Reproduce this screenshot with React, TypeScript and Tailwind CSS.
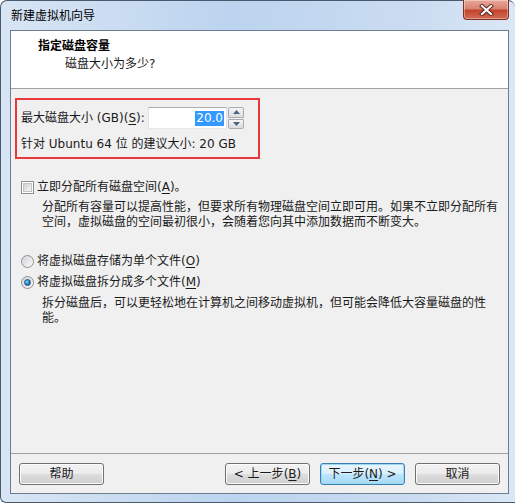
import React from 'react';

const font = { fontFamily: '"DejaVu Sans", "Noto Sans CJK SC", sans-serif' };

const Key: React.FC<{ k: string }> = ({ k }) => (
  <>
    (<span className="underline underline-offset-2">{k}</span>)
  </>
);

const WinButton: React.FC<{ children: React.ReactNode; primary?: boolean }> = ({ children, primary }) => (
  <button
    className={`h-[22px] w-[85px] rounded-[3px] border text-[12px] leading-none text-[#1a1a1a] ${
      primary
        ? 'border-[#3c7fb1] bg-[linear-gradient(#eaf6fd_0%,#d9f0fc_50%,#bee6fd_51%,#a7d9f5_100%)] shadow-[inset_0_0_0_1px_#9bd8f5]'
        : 'border-[#707070] bg-[linear-gradient(#f2f2f2_0%,#ebebeb_50%,#dddddd_51%,#cfcfcf_100%)] shadow-[inset_0_0_0_1px_#fcfcfc]'
    }`}
  >
    {children}
  </button>
);

const Checkbox: React.FC = () => (
  <span className="flex h-[13px] w-[13px] items-center justify-center border border-[#8e8f8f] bg-white">
    <span className="h-[9px] w-[9px] border border-[#c4c4c4] bg-[linear-gradient(135deg,#cbcfd5,#f6f6f6)]" />
  </span>
);

const Radio: React.FC<{ checked?: boolean }> = ({ checked }) => (
  <span className="flex h-[13px] w-[13px] items-center justify-center rounded-full border border-[#8e8f8f] bg-[linear-gradient(135deg,#d2d4d8,#fafafa)]">
    {checked && (
      <span className="h-[7px] w-[7px] rounded-full border border-[#1c5180] bg-[radial-gradient(circle_at_35%_35%,#8ad4f7,#1d77ba_60%,#0e4a84)]" />
    )}
  </span>
);

export default function App() {
  return (
    <div className="h-[503px] w-[515px] overflow-hidden bg-white" style={font}>
      <div className="flex h-[503px] w-[515px] flex-col rounded-t-[7px] rounded-bl-[6px] border-b border-l border-t border-[#4a5a6e] bg-[linear-gradient(90deg,#d8e5f4_0%,#bcd4ef_45%,#cadcf1_80%,#dbe7f5_100%)]">
        {/* Title bar */}
        <div className="relative flex h-[29px] items-center pl-[10px]">
          <span className="text-[12px] text-black">新建虚拟机向导</span>
          <div className="absolute right-[6px] top-[-1px] flex h-[20px] w-[46px] items-center justify-center rounded-b-[4px] border border-t-0 border-[#7d3224] bg-[linear-gradient(#e9a799_0%,#d98473_45%,#c3442d_55%,#d46b55_100%)] shadow-[inset_0_0_0_1px_rgba(255,255,255,0.35)]">
            <svg width="15" height="12" viewBox="0 0 15 12">
              <path d="M3 2 L12 10 M12 2 L3 10" stroke="#5a2218" strokeWidth="4" strokeLinecap="square" />
              <path d="M3 2 L12 10 M12 2 L3 10" stroke="#ffffff" strokeWidth="2.2" strokeLinecap="square" />
            </svg>
          </div>
        </div>

        {/* Client area */}
        <div className="ml-[9px] mr-[6px] flex h-[464px] flex-col border border-[#6d7d8f] bg-[#f0f0f0] text-[12px] leading-[15px] text-[#1a1a1a]">
          <div className="h-[58px] border-b border-[#a0a0a0] bg-white pl-[27px] pt-[8px]">
            <div className="font-bold text-black">指定磁盘容量</div>
            <div className="mt-[3px] pl-[27px]">磁盘大小为多少?</div>
          </div>

          <div className="flex-1">
            <div className="ml-[4px] mt-[9px] h-[61px] w-[245px] border-2 border-[#e8383a] pl-[4px] pt-[7px]">
              <div className="flex h-[22px] items-center">
                <span className="w-[127px] whitespace-nowrap">
                  最大磁盘大小 (GB)<Key k="S" />:
                </span>
                <div className="flex h-[22px] w-[79px] items-center justify-end border border-[#abadb3] border-b-[#e3e9ef] border-l-[#e2e3ea] border-r-[#dbdfe6] bg-white pr-[2px]">
                  <span className="bg-[#3399ff] px-[1px] text-white">20.0</span>
                </div>
                <div className="ml-px flex h-[22px] w-[16px] flex-col gap-px">
                  <div className="flex flex-1 items-center justify-center rounded-t-[2px] border border-[#a8acb3] bg-[linear-gradient(#f5f5f5,#dcdcdc)]">
                    <svg width="7" height="4" viewBox="0 0 7 4"><path d="M0 4 L3.5 0 L7 4 Z" fill="#4d6185" /></svg>
                  </div>
                  <div className="flex flex-1 items-center justify-center rounded-b-[2px] border border-[#a8acb3] bg-[linear-gradient(#f5f5f5,#dcdcdc)]">
                    <svg width="7" height="4" viewBox="0 0 7 4"><path d="M0 0 L7 0 L3.5 4 Z" fill="#4d6185" /></svg>
                  </div>
                </div>
              </div>
              <div className="mt-[8px] whitespace-nowrap">针对 Ubuntu 64 位 的建议大小: 20 GB</div>
            </div>

            <div className="ml-[10px] mt-[21px] flex items-center gap-[3px]">
              <Checkbox />
              <span>
                立即分配所有磁盘空间<Key k="A" />。
              </span>
            </div>
            <div className="mt-[5px] whitespace-nowrap pl-[31px]">
              分配所有容量可以提高性能，但要求所有物理磁盘空间立即可用。如果不立即分配所有
              <br />
              空间，虚拟磁盘的空间最初很小，会随着您向其中添加数据而不断变大。
            </div>

            <div className="ml-[10px] mt-[24px] flex items-center gap-[3px]">
              <Radio />
              <span>
                将虚拟磁盘存储为单个文件<Key k="O" />
              </span>
            </div>
            <div className="ml-[10px] mt-[6px] flex items-center gap-[3px]">
              <Radio checked />
              <span>
                将虚拟磁盘拆分成多个文件<Key k="M" />
              </span>
            </div>
            <div className="mt-[6px] whitespace-nowrap pl-[31px]">
              拆分磁盘后，可以更轻松地在计算机之间移动虚拟机，但可能会降低大容量磁盘的性
              <br />
              能。
            </div>
          </div>

          <div className="flex h-[40px] items-start border-t border-[#a0a0a0] pl-[8px] pr-[8px] pt-[9px]">
            <WinButton>帮助</WinButton>
            <div className="ml-auto flex gap-[10px]">
              <WinButton>
                &lt; 上一步<Key k="B" />
              </WinButton>
              <WinButton primary>
                下一步<Key k="N" /> &gt;
              </WinButton>
              <WinButton>取消</WinButton>
            </div>
          </div>
        </div>
      </div>
    </div>
  );
}
